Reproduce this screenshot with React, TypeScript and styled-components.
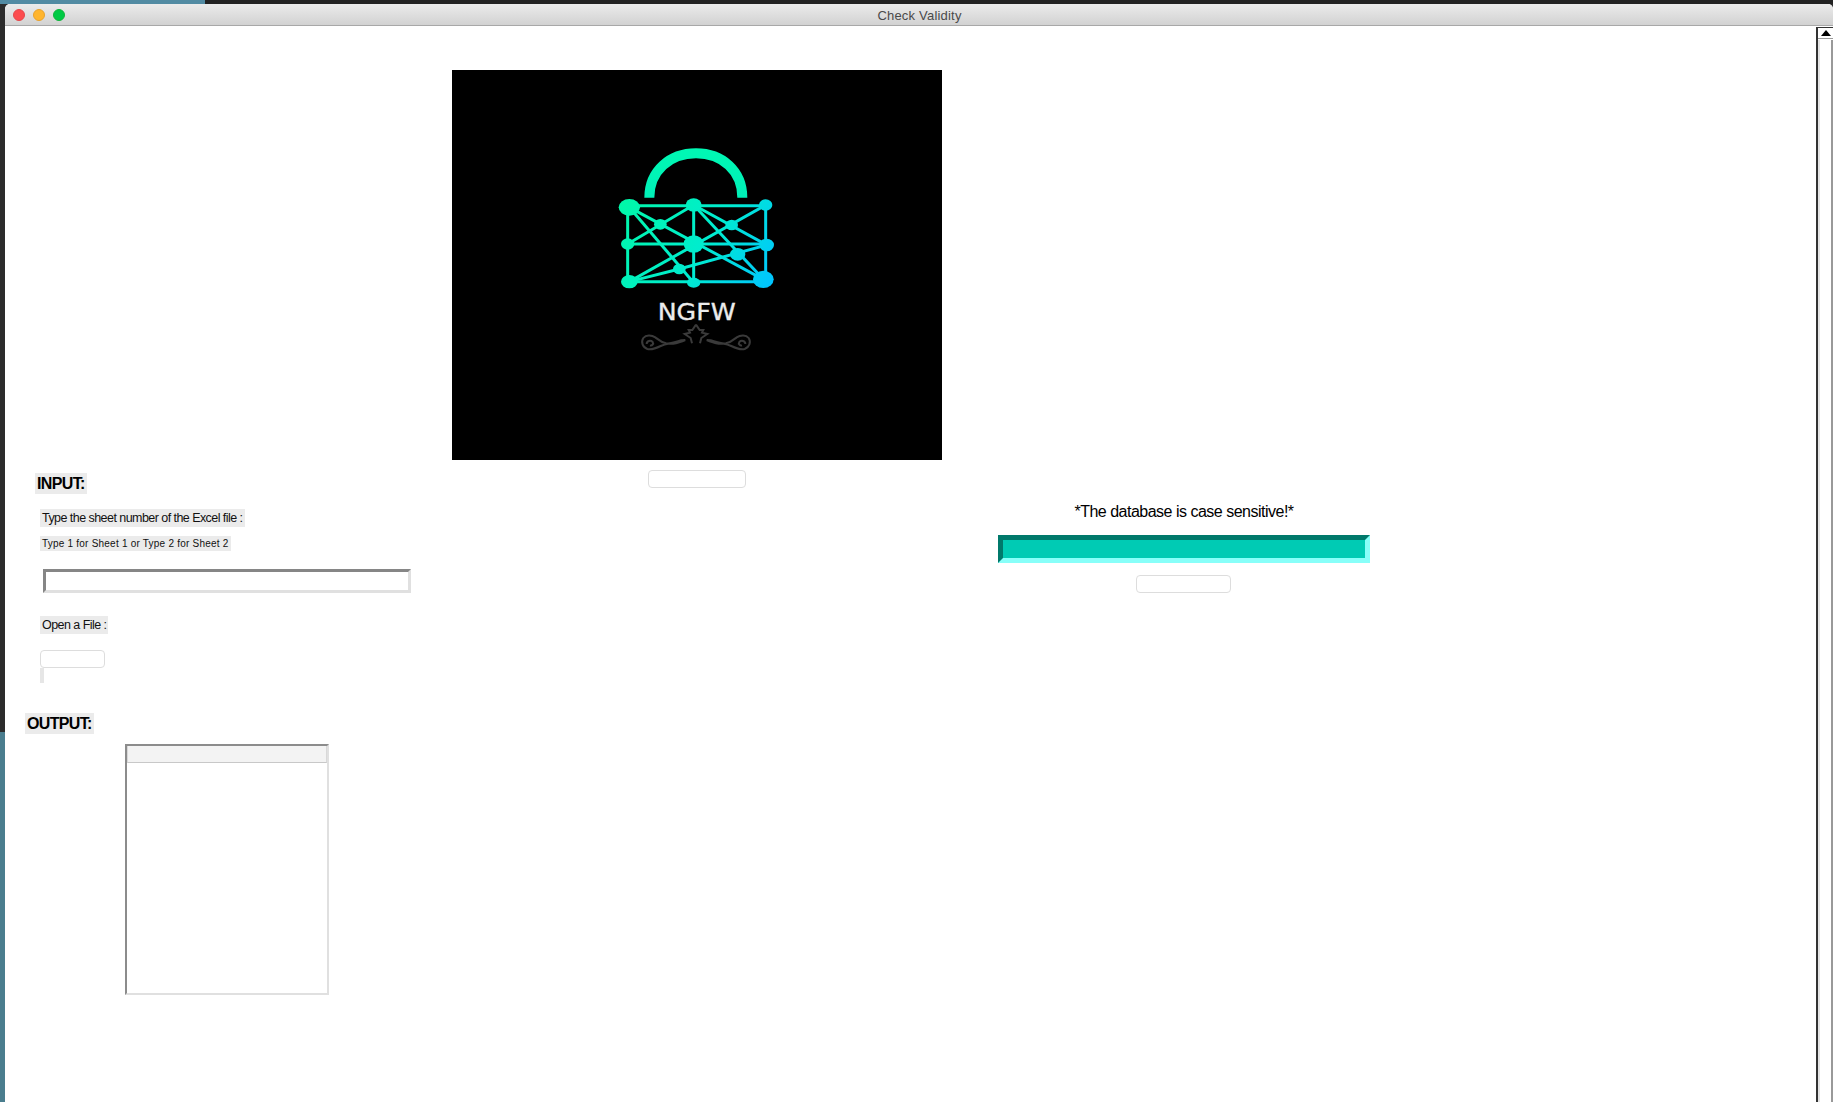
import React from 'react';
import styled, { createGlobalStyle } from 'styled-components';

const GlobalStyle = createGlobalStyle`
  html, body {
    margin: 0;
    padding: 0;
    height: 100%;
    overflow: hidden;
  }
  * {
    box-sizing: border-box;
  }
`;

const Desktop = styled.div`
  width: 1833px;
  height: 1102px;
  padding: 4px 0 0 5px;
  overflow: hidden;
  background:
    linear-gradient(to right, #528ba3 205px, #222222 205px) top / 100% 4px no-repeat,
    linear-gradient(#2c2c2c 732px, #4a7d8e 732px);
`;

const Window = styled.div`
  height: 100%;
  display: flex;
  flex-direction: column;
  background: #ffffff;
  border-radius: 5px 5px 0 0;
  overflow: hidden;
  font-family: 'Liberation Sans', Arial, sans-serif;
`;

const TitleBar = styled.div`
  position: relative;
  flex: 0 0 22px;
  display: flex;
  align-items: center;
  justify-content: center;
  padding: 2px 0 0 1px;
  background: linear-gradient(#ebebeb, #d2d2d2);
  border-bottom: 1px solid #a8a8a8;
  color: #4a4a4a;
  font-size: 13px;
  letter-spacing: 0.2px;
`;

const Lights = styled.div`
  position: absolute;
  left: 8px;
  top: 5px;
  display: flex;
  gap: 8px;
`;

const Light = styled.span<{ $color: string; $edge: string }>`
  width: 12px;
  height: 12px;
  border-radius: 50%;
  background: ${(p) => p.$color};
  border: 1px solid ${(p) => p.$edge};
`;

const Body = styled.div`
  flex: 1;
  display: flex;
  min-height: 0;
`;

const Content = styled.div`
  flex: 1;
  display: flex;
  align-items: flex-start;
`;

const LeftColumn = styled.div`
  flex: 0 0 447px;
  display: flex;
  flex-direction: column;
  align-items: flex-start;
  padding-top: 447px;
`;

const CenterColumn = styled.div`
  flex: 0 0 490px;
  display: flex;
  flex-direction: column;
  align-items: center;
  padding-top: 44px;
`;

const RightColumn = styled.div`
  flex: 0 0 372px;
  margin-left: 56px;
  display: flex;
  flex-direction: column;
  align-items: center;
  padding-top: 476px;
`;

const Heading = styled.div<{ $left: number; $top?: number }>`
  margin: ${(p) => p.$top ?? 0}px 0 0 ${(p) => p.$left}px;
  height: 21px;
  padding: 0 2px;
  background: #ebebeb;
  color: #000000;
  font-size: 16px;
  line-height: 22px;
  font-weight: 700;
  letter-spacing: -0.65px;
`;

const Label = styled.div<{ $top: number }>`
  margin: ${(p) => p.$top}px 0 0 35px;
  height: 18px;
  padding: 0 2px;
  background: #ebebeb;
  color: #111111;
  font-size: 12.5px;
  line-height: 18px;
  letter-spacing: -0.55px;
`;

const Hint = styled.div`
  margin: 9px 0 0 35px;
  height: 15px;
  padding: 0 2px;
  background: #ebebeb;
  color: #111111;
  font-size: 10px;
  line-height: 15px;
  letter-spacing: 0.22px;
`;

const SheetInput = styled.div`
  margin: 18px 0 0 38px;
  width: 368px;
  height: 24px;
  background: #ffffff;
  border-style: solid;
  border-width: 3px;
  border-color: #868686 #e0e0e0 #e0e0e0 #868686;
`;

const BlankButton = styled.div<{ $width: number; $top: number; $left?: number }>`
  flex: 0 0 18px;
  width: ${(p) => p.$width}px;
  height: 18px;
  margin: ${(p) => p.$top}px 0 0 ${(p) => p.$left ?? 0}px;
  background: #ffffff;
  border: 1px solid #dddddd;
  border-radius: 4px;
`;

const FileStub = styled.div`
  margin-left: 35px;
  width: 4px;
  height: 15px;
  background: #e6e6e6;
`;

const ResultTable = styled.div`
  margin: 10px 0 0 120px;
  width: 204px;
  height: 251px;
  background: #ffffff;
  border-style: solid;
  border-width: 2px;
  border-color: #8c8c8c #e0e0e0 #e0e0e0 #8c8c8c;
`;

const TableHeader = styled.div`
  height: 17px;
  background: #f3f3f3;
  border-bottom: 1px solid #c8c8c8;
  border-left: 1px solid #d8d8d8;
  border-right: 1px solid #d8d8d8;
`;

const LogoFrame = styled.svg`
  display: block;
  width: 490px;
  height: 390px;
  background: #000000;
`;

const Notice = styled.div`
  height: 20px;
  color: #000000;
  font-size: 16px;
  line-height: 20px;
  letter-spacing: -0.5px;
`;

const DatabaseField = styled.div`
  margin-top: 13px;
  width: 372px;
  height: 28px;
  background: #00cbb4;
  border-style: solid;
  border-width: 5px;
  border-color: #00796b #88fff9 #88fff9 #00796b;
`;

const ScrollBar = styled.div`
  flex: 0 0 17px;
  display: flex;
  flex-direction: column;
  margin-top: 1px;
  background: #ffffff;
  border-left: 2px solid #333333;
  border-top: 1px solid #333333;
`;

const ScrollArrow = styled.div`
  flex: 0 0 11px;
  display: flex;
  align-items: center;
  justify-content: center;
  border-bottom: 1px solid #9a9a9a;
`;

const ScrollTrack = styled.div`
  flex: 1;
  margin-top: 1px;
  border-left: 2px solid #e4e4e4;
  border-right: 2px solid #999999;
`;

const nodes: [number, number, number, number][] = [
  [118, 232, 32, 25],
  [311, 225, 24, 20],
  [527, 225, 20, 17],
  [113, 342, 20, 17],
  [311, 342, 30, 26],
  [530, 345, 22, 19],
  [118, 455, 25, 20],
  [311, 458, 20, 15],
  [520, 448, 31, 26],
  [211, 283, 19, 16],
  [425, 285, 19, 16],
  [443, 373, 23, 19],
  [268, 417, 19, 16],
];

const links: string[] = [
  'M118 227H527',
  'M527 225V448',
  'M118 455H520',
  'M113 232V455',
  'M113 342H530',
  'M311 225V458',
  'M118 232L520 448',
  'M118 232L311 458',
  'M311 225L113 342',
  'M311 225L530 345',
  'M311 225L520 448',
  'M527 225L118 455',
  'M118 455L268 417L530 345',
];

const flourish =
  'M318 584L307 600L296 600L300 608L284 612L302 624L306 640 M286 630C266 638 250 644 228 640C212 636 204 628 196 622C184 614 168 614 160 624C152 636 158 652 172 657C186 660 200 654 212 648C228 640 246 640 262 634C270 631 278 630 286 630 M170 642C170 632 182 630 188 636C192 642 186 648 180 646';

const Logo = () => (
  <LogoFrame viewBox="-414 -180 1470 1170" role="img" aria-label="NGFW logo">
    <defs>
      <linearGradient id="mesh" gradientUnits="userSpaceOnUse" x1="100" y1="210" x2="540" y2="470">
        <stop offset="0" stopColor="#00f8a8" />
        <stop offset="0.55" stopColor="#00ecd0" />
        <stop offset="1" stopColor="#00c4ff" />
      </linearGradient>
      <linearGradient id="shackle" x1="0" y1="0" x2="0" y2="1">
        <stop offset="0" stopColor="#00f8b4" />
        <stop offset="1" stopColor="#00f0b8" />
      </linearGradient>
    </defs>
    <path d="M178 203C178 122 240 70 318 70C396 70 457 122 457 203" fill="none" stroke="url(#shackle)" strokeWidth="30" />
    <g fill="none" stroke="url(#mesh)" strokeWidth="9">
      {links.map((d) => (
        <path key={d} d={d} />
      ))}
    </g>
    <g fill="url(#mesh)">
      {nodes.map(([cx, cy, rx, ry]) => (
        <ellipse key={`${cx}-${cy}`} cx={cx} cy={cy} rx={rx} ry={ry} />
      ))}
    </g>
    <text
      x="320"
      y="571"
      textAnchor="middle"
      fill="#ececec"
      stroke="#ececec"
      strokeWidth="1"
      fontFamily="'DejaVu Sans', sans-serif"
      fontSize="70"
      textLength="234"
      lengthAdjust="spacingAndGlyphs"
    >
      NGFW
    </text>
    <g fill="none" stroke="#3a3a3a" strokeWidth="6">
      <path d={flourish} />
      <path d={flourish} transform="translate(636 0) scale(-1 1)" />
    </g>
  </LogoFrame>
);

export default function App() {
  return (
    <Desktop>
      <GlobalStyle />
      <Window>
        <TitleBar>
          <Lights>
            <Light $color="#fc4c4e" $edge="#e5474a" />
            <Light $color="#ffb52e" $edge="#e8a12c" />
            <Light $color="#00ca45" $edge="#10b43c" />
          </Lights>
          Check Validity
        </TitleBar>
        <Body>
          <Content>
            <LeftColumn>
              <Heading $left={30}>INPUT:</Heading>
              <Label $top={15}>Type the sheet number of the Excel file :</Label>
              <Hint>Type 1 for Sheet 1 or Type 2 for Sheet 2</Hint>
              <SheetInput />
              <Label $top={23}>Open a File :</Label>
              <BlankButton $width={65} $top={16} $left={35} />
              <FileStub />
              <Heading $left={20} $top={30}>OUTPUT:</Heading>
              <ResultTable>
                <TableHeader />
              </ResultTable>
            </LeftColumn>
            <CenterColumn>
              <Logo />
              <BlankButton $width={98} $top={10} />
            </CenterColumn>
            <RightColumn>
              <Notice>*The database is case sensitive!*</Notice>
              <DatabaseField />
              <BlankButton $width={95} $top={12} $left={-2} />
            </RightColumn>
          </Content>
          <ScrollBar>
            <ScrollArrow>
              <svg width="10" height="6" viewBox="0 0 10 6">
                <path d="M5 0L10 6H0Z" fill="#000000" />
              </svg>
            </ScrollArrow>
            <ScrollTrack />
          </ScrollBar>
        </Body>
      </Window>
    </Desktop>
  );
}
